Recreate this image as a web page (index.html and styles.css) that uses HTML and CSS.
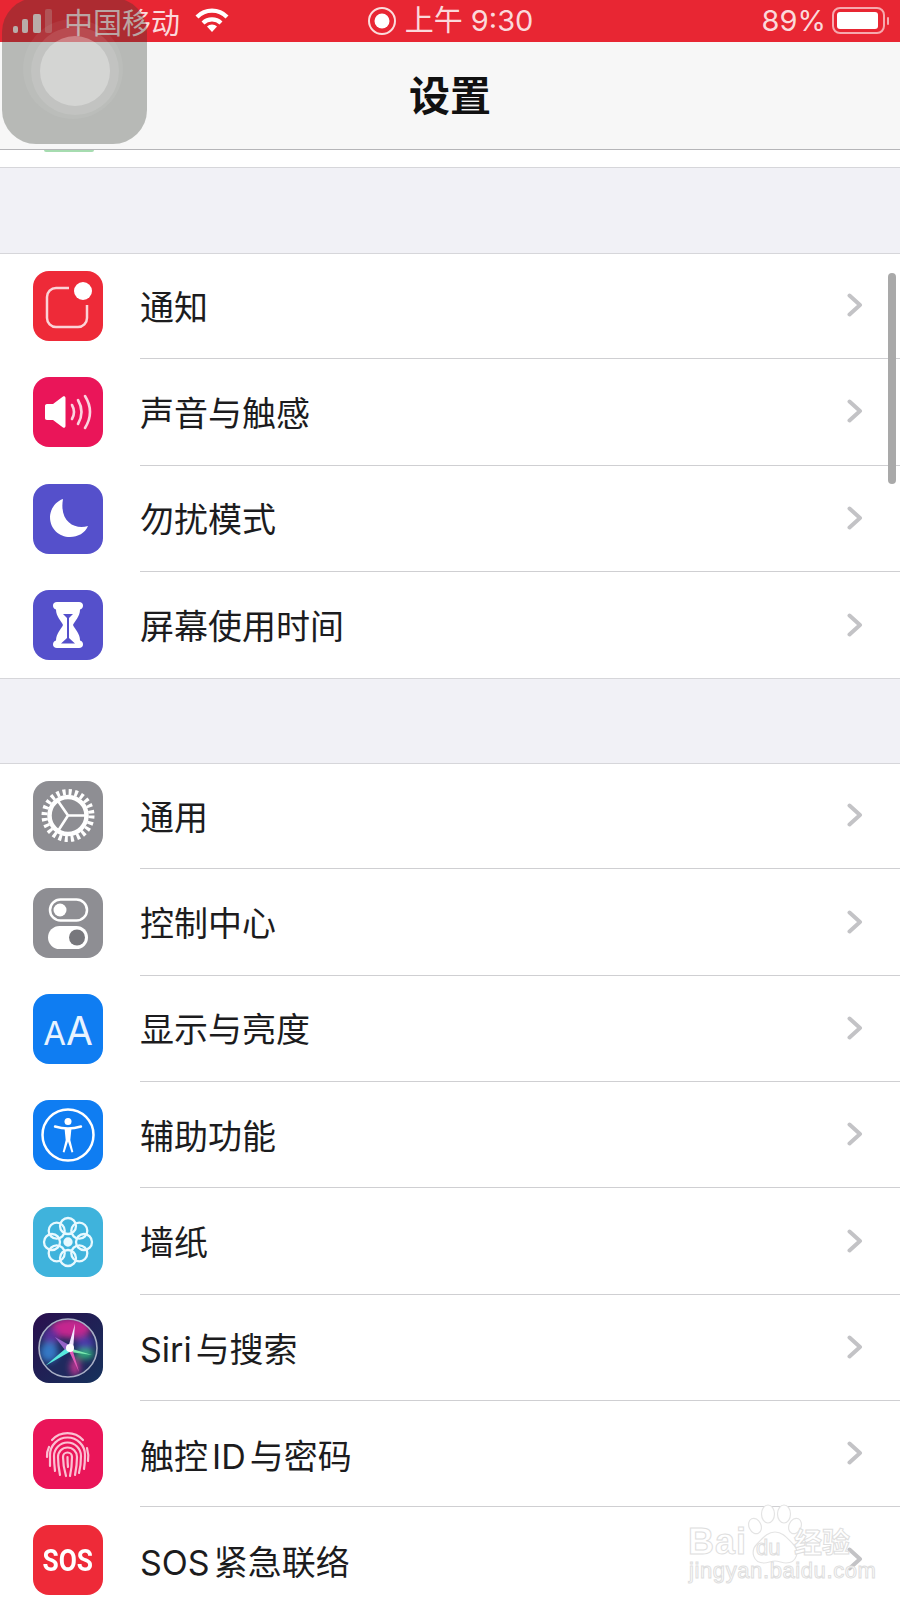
FILE: index.html
```html
<!DOCTYPE html>
<html lang="zh-CN">
<head>
<meta charset="utf-8">
<title>设置</title>
<link rel="stylesheet" href="styles.css">
</head>
<body>
<div class="screen">
  <header class="status">
    <div class="status-left">
      <svg class="signal" width="42" height="28" viewBox="0 0 42 28"><rect x="1" y="19" width="5" height="7" rx="2" fill="#f9e3e3"/><rect x="10" y="12" width="6" height="14" rx="2" fill="#f9e3e3"/><rect x="21" y="7" width="8" height="19" rx="2" fill="#f9e3e3"/><rect x="33" y="2" width="7" height="24" rx="2" fill="#f6d5d5" opacity=".35"/></svg>
      <span class="carrier">中国移动</span>
      <svg class="wifi" width="36" height="26" viewBox="0 0 36 26"><path d="M18 24l-5-5.500a7 7 0 0 1 10 0z" fill="#fff"/><path d="M9 15a13 13 0 0 1 18 0" fill="none" stroke="#fff" stroke-width="4.200"/><path d="M3 9a21 21 0 0 1 30 0" fill="none" stroke="#fff" stroke-width="4.200"/></svg>
    </div>
    <div class="status-mid">
      <svg width="30" height="30" viewBox="0 0 30 30"><circle cx="15" cy="15" r="13" fill="none" stroke="#fbdcdc" stroke-width="2"/><circle cx="15" cy="15" r="7.500" fill="#fff"/></svg>
      <span class="clock">上午 9:30</span>
    </div>
    <div class="status-right">
      <span class="pct">89%</span>
      <svg width="58" height="28" viewBox="0 0 58 28"><rect x="1" y="1" width="51" height="25" rx="7" fill="none" stroke="#f6a9ae" stroke-width="2"/><rect x="5" y="5" width="41" height="17" rx="3" fill="#fff"/><rect x="55" y="10" width="2" height="8" rx="1" fill="#f6a9ae"/></svg>
    </div>
  </header>
  <nav class="nav"><h1 class="title">设置</h1></nav>
  <div class="peek"><span class="peek-green"></span></div>

  <div class="gap"></div>
  <section class="group">
    <div class="row">
      <svg class="icon" viewBox="0 0 70 70"><rect width="70" height="70" rx="16" fill="#ee2a38"/><path d="M36 17H23a9 9 0 0 0-9 9v21a9 9 0 0 0 9 9h22a9 9 0 0 0 9-9V34" fill="none" stroke="#fbd3d6" stroke-width="2.500"/><circle cx="50" cy="20" r="9" fill="#fff"/></svg>
      <div class="row-body"><span class="label">通知</span><svg class="chev" viewBox="0 0 16 24"><path d="M2.500 2.500 13 12 2.500 21.500"/></svg></div>
    </div>
    <div class="row">
      <svg class="icon" viewBox="0 0 70 70"><rect width="70" height="70" rx="16" fill="#ea1559"/><path d="M14 27h6l10-7.500c1-.7 2.500-.2 2.500 1.500v28c0 1.700-1.500 2.200-2.500 1.500L20 43h-6c-1.500 0-2-1-2-2V29c0-1 .5-2 2-2z" fill="#fff"/><path d="M39 28q4 7 0 14M45 23q7 12 0 24M52 19q10 16 0 32" fill="none" stroke="#fbd3df" stroke-width="2.600" stroke-linecap="round"/></svg>
      <div class="row-body"><span class="label">声音与触感</span><svg class="chev" viewBox="0 0 16 24"><path d="M2.500 2.500 13 12 2.500 21.500"/></svg></div>
    </div>
    <div class="row">
      <svg class="icon" viewBox="0 0 70 70"><rect width="70" height="70" rx="16" fill="#5550cb"/><path d="M30 15C21 18 17 27 17 33 17 45 26 53 37 53 45 53 52 49 55 42 42 46 26 38 30 15z" fill="#fff"/></svg>
      <div class="row-body"><span class="label">勿扰模式</span><svg class="chev" viewBox="0 0 16 24"><path d="M2.500 2.500 13 12 2.500 21.500"/></svg></div>
    </div>
    <div class="row">
      <svg class="icon" viewBox="0 0 70 70"><rect width="70" height="70" rx="16" fill="#5550cb"/><path d="M24 12h22c2.500 0 4 1.500 4 3.500s-1 3.500-3 4c0 7-5 11-7 15.500 2 4.500 7 8.500 7 15.500 2 .5 3 2 3 4s-1.500 3.500-4 3.500H24c-2.500 0-4-1.500-4-3.500s1-3.500 3-4c0-7 5-11 7-15.500-2-4.500-7-8.500-7-15.500-2-.5-3-2-3-4s1.500-3.500 4-3.500z" fill="#fff"/><path d="M30 24h10l-4 4v20l6 5.500H28l6-5.500V28z" fill="#5550cb"/></svg>
      <div class="row-body row-last"><span class="label">屏幕使用时间</span><svg class="chev" viewBox="0 0 16 24"><path d="M2.500 2.500 13 12 2.500 21.500"/></svg></div>
    </div>
  </section>

  <div class="gap gap-after"></div>
  <section class="group">
    <div class="row">
      <svg class="icon" viewBox="0 0 70 70"><rect width="70" height="70" rx="16" fill="#8e8e93"/><circle cx="35" cy="34.500" r="18.500" fill="none" stroke="#fff" stroke-width="4.500"/><circle cx="35" cy="34.500" r="23.500" fill="none" stroke="#fff" stroke-width="6" stroke-dasharray="3.080 3.070"/><path d="M35 34.500 25 20M35 34.500H54M35 34.500 25 50" fill="none" stroke="#fff" stroke-width="2.600"/></svg>
      <div class="row-body"><span class="label">通用</span><svg class="chev" viewBox="0 0 16 24"><path d="M2.500 2.500 13 12 2.500 21.500"/></svg></div>
    </div>
    <div class="row">
      <svg class="icon" viewBox="0 0 70 70"><rect width="70" height="70" rx="16" fill="#8e8e93"/><rect x="17" y="11.500" width="37" height="21" rx="10.500" fill="none" stroke="#fff" stroke-width="2.500"/><circle cx="27" cy="22" r="6.500" fill="#fff"/><rect x="15" y="38" width="40" height="23" rx="11.500" fill="#fff"/><circle cx="44" cy="49.500" r="8" fill="#77777c"/></svg>
      <div class="row-body"><span class="label">控制中心</span><svg class="chev" viewBox="0 0 16 24"><path d="M2.500 2.500 13 12 2.500 21.500"/></svg></div>
    </div>
    <div class="row">
      <div class="icon aa"><span class="aa-small">A</span><span class="aa-big">A</span></div>
      <div class="row-body"><span class="label">显示与亮度</span><svg class="chev" viewBox="0 0 16 24"><path d="M2.500 2.500 13 12 2.500 21.500"/></svg></div>
    </div>
    <div class="row">
      <svg class="icon" viewBox="0 0 70 70"><rect width="70" height="70" rx="16" fill="#0f7df2"/><circle cx="35" cy="35" r="25.500" fill="none" stroke="#fff" stroke-width="2.500"/><circle cx="35" cy="21.500" r="3.500" fill="#fff"/><path d="M22 26.500c5 1.500 9 2 13 2s8-.5 13-2" fill="none" stroke="#fff" stroke-width="2.400" stroke-linecap="round"/><path d="M31.500 28h7l-1.200 12 3 12-1.800.6-3.500-11-3.500 11-1.800-.6 3-12z" fill="#fff"/></svg>
      <div class="row-body"><span class="label">辅助功能</span><svg class="chev" viewBox="0 0 16 24"><path d="M2.500 2.500 13 12 2.500 21.500"/></svg></div>
    </div>
    <div class="row">
      <svg class="icon" viewBox="0 0 70 70"><rect width="70" height="70" rx="16" fill="#3fb3dc"/><g fill="none" stroke="#e8f9ff" stroke-width="2.300"><circle cx="35" cy="35" r="3.500" fill="#e8f9ff"/><circle cx="35" cy="19" r="8"/><circle cx="46.300" cy="23.700" r="8"/><circle cx="51" cy="35" r="8"/><circle cx="46.300" cy="46.300" r="8"/><circle cx="35" cy="51" r="8"/><circle cx="23.700" cy="46.300" r="8"/><circle cx="19" cy="35" r="8"/><circle cx="23.700" cy="23.700" r="8"/></g></svg>
      <div class="row-body"><span class="label">墙纸</span><svg class="chev" viewBox="0 0 16 24"><path d="M2.500 2.500 13 12 2.500 21.500"/></svg></div>
    </div>
    <div class="row">
      <svg class="icon" viewBox="0 0 70 70"><defs><linearGradient id="sb" x1="0" y1="0" x2="1" y2="1"><stop offset="0" stop-color="#2a0f4e"/><stop offset="1" stop-color="#16325c"/></linearGradient><filter id="b3" x="-50%" y="-50%" width="200%" height="200%"><feGaussianBlur stdDeviation="3"/></filter><filter id="b1" x="-50%" y="-50%" width="200%" height="200%"><feGaussianBlur stdDeviation=".5"/></filter><clipPath id="sclip"><circle cx="35" cy="35" r="29"/></clipPath></defs><rect width="70" height="70" rx="16" fill="url(#sb)"/><g clip-path="url(#sclip)"><rect width="70" height="70" fill="#1f2a5e"/><g filter="url(#b3)"><ellipse cx="38" cy="15" rx="20" ry="10" fill="#c5278f"/><ellipse cx="18" cy="24" rx="8" ry="9" fill="#5a2f9c"/><ellipse cx="16" cy="39" rx="9" ry="10" fill="#3478c4"/><ellipse cx="52" cy="30" rx="9" ry="7" fill="#4a3aa8"/><ellipse cx="52" cy="41" rx="9" ry="5" fill="#2fb07a"/><ellipse cx="42" cy="54" rx="5" ry="9" fill="#b8348f"/></g><g filter="url(#b1)"><path d="M38 31 12 53 40 37z" fill="#58eadf"/><path d="M35 35 42 11 40 37z" fill="#f3e6ff"/><path d="M33 34 59 42 37 39z" fill="#7be8b0"/><path d="M35 36 46 59 39 35z" fill="#e35ab8"/><path d="M22 24 38 33 32 37z" fill="#b070e0" opacity=".8"/><circle cx="37" cy="35" r="4" fill="#fff"/></g></g><circle cx="35" cy="35" r="29" fill="none" stroke="#a9b0c6" stroke-width="1.600"/></svg>
      <div class="row-body"><span class="label">Siri<span class="cjk cjk-gap">与搜索</span></span><svg class="chev" viewBox="0 0 16 24"><path d="M2.500 2.500 13 12 2.500 21.500"/></svg></div>
    </div>
    <div class="row">
      <svg class="icon" viewBox="0 0 70 70"><rect width="70" height="70" rx="16" fill="#ea1559"/><g fill="none" stroke="#fbc0d2" stroke-width="2.200" stroke-linecap="round"><path d="M19 21A21 21 0 0 1 50 21"/><path d="M14 38A20 20 0 0 1 16 28M54 29Q56 36 55 42"/><path d="M17 47Q17 40 17 36A17.500 17.500 0 0 1 52 36Q52 44 51 50"/><path d="M22 52Q21 44 21 37A13.500 13.500 0 0 1 48 37Q48 46 46 54"/><path d="M27 56Q25 46 25 38A9.500 9.500 0 0 1 44 38Q44 46 42 56"/><path d="M33 57Q30 47 30 38A4.500 4.500 0 0 1 39 38Q39 48 37 57"/><path d="M34.500 38Q34.500 44 35 48"/></g></svg>
      <div class="row-body"><span class="label">触控<span class="latin-gap">ID</span><span class="cjk cjk-gap">与密码</span></span><svg class="chev" viewBox="0 0 16 24"><path d="M2.500 2.500 13 12 2.500 21.500"/></svg></div>
    </div>
    <div class="row">
      <div class="icon sos"><span class="sos-text">SOS</span></div>
      <div class="row-body"><span class="label">SOS<span class="cjk cjk-gap">紧急联络</span></span><svg class="chev" viewBox="0 0 16 24"><path d="M2.500 2.500 13 12 2.500 21.500"/></svg></div>
    </div>
  </section>

  <div class="scrollbar"></div>

  <div class="assist">
    <span class="assist-ring3"></span>
    <span class="assist-ring2"></span>
    <span class="assist-dot"></span>
  </div>

  <div class="watermark">
    <svg class="paw" width="70" height="66" viewBox="0 0 70 66"><g fill="#fff" stroke="#e4e4e4" stroke-width="1.200"><ellipse cx="28" cy="10" rx="6.500" ry="9"/><ellipse cx="44" cy="10" rx="6.500" ry="9"/><ellipse cx="15" cy="22" rx="6" ry="8" transform="rotate(-25 15 22)"/><ellipse cx="55" cy="22" rx="6" ry="8" transform="rotate(25 55 22)"/><path d="M35 28c8 0 12 6 18 12 7 7 4 19-7 19-4 0-7-2-11-2s-7 2-11 2c-11 0-14-12-7-19 6-6 10-12 18-12z"/></g></svg>
    <span class="wm-bai">Bai</span>
    <span class="wm-du">du</span>
    <span class="wm-cn">经验</span>
    <span class="wm-url">jingyan.baidu.com</span>
  </div>
</div>
</body>
</html>
```

FILE: styles.css
```css
* { box-sizing: border-box; }
html, body { margin: 0; padding: 0; }
body {
  background: #fff;
  font-family: "Inter", "Noto Sans CJK SC", sans-serif;
  color: #1c1c1e;
}
.screen {
  position: relative;
  width: 900px;
  height: 1600px;
  overflow: hidden;
  background: #fff;
}

/* Status bar */
.status {
  height: 42px;
  background: #e82633;
  color: #fbd9db;
  display: grid;
  grid-template-columns: 1fr auto 1fr;
  align-items: center;
  font-size: 29px;
}
.status-left { display: flex; align-items: center; padding-left: 12px; }
.signal { margin-right: 10px; }
.carrier { font-family: "Noto Sans CJK SC", sans-serif; font-size: 29px; line-height: 42px; }
.wifi { margin-left: 14px; }
.status-mid { display: flex; align-items: center; gap: 8px; }
.clock { font-family: "Inter", "Noto Sans CJK SC", sans-serif; font-size: 29px; line-height: 42px; white-space: nowrap; }
.status-right { display: flex; justify-content: flex-end; align-items: center; gap: 6px; padding-right: 10px; }
.pct { font-size: 29px; line-height: 42px; }

/* Nav */
.nav {
  height: 108px;
  padding-bottom: 6px;
  background: #f7f7f7;
  border-bottom: 1px solid #b5b5b8;
  display: flex;
  align-items: center;
  justify-content: center;
}
.title {
  margin: 0;
  font-family: "Noto Sans CJK SC", sans-serif;
  font-size: 41px;
  line-height: 50px;
  font-weight: 700;
  color: #111;
}
.peek {
  height: 18px;
  background: #fff;
  border-bottom: 1px solid #d6d6da;
  position: relative;
}
.peek-green {
  position: absolute;
  left: 44px;
  top: 0;
  width: 50px;
  height: 2px;
  border-radius: 0 0 6px 6px;
  background: #a6dcb0;
}

/* Groups */
.gap {
  height: 86px;
  background: #f1f1f6;
  border-bottom: 1px solid #d6d6da;
}
.gap-after { border-top: 1px solid #d6d6da; }
.group { margin-top: -1px; }
.row {
  height: 106.3px;
  display: flex;
  align-items: center;
  padding-left: 33px;
}
.icon {
  flex: none;
  width: 70px;
  height: 70px;
  display: block;
}
.row-body {
  flex: 1;
  height: 100%;
  margin-left: 37px;
  padding-right: 37px;
  border-bottom: 1px solid #cfcfd2;
  display: flex;
  align-items: center;
  justify-content: space-between;
}
.row-last { border-bottom: 0; }
.label {
  font-family: "Inter", "Noto Sans CJK SC", sans-serif;
  font-size: 34px;
  line-height: 44px;
  padding-top: 4px;
  color: #1c1c1e;
  white-space: nowrap;
}
.cjk { font-family: "Noto Sans CJK SC", sans-serif; }
.cjk-gap { margin-left: 4px; }
.latin-gap { margin-left: 4px; }
.chev {
  width: 16px;
  height: 24px;
  margin-bottom: 1px;
  fill: none;
  stroke: #c3c3c6;
  stroke-width: 4;
  stroke-linecap: round;
  stroke-linejoin: round;
}
.aa {
  background: #0f7df2;
  border-radius: 16px;
  color: #e8f3ff;
  font-family: "Inter", sans-serif;
  display: flex;
  justify-content: center;
  align-items: baseline;
  line-height: 70px;
  padding-top: 2px;
}
.aa-small { font-size: 33px; }
.aa-big { font-size: 39px; }
.sos {
  background: #ee2a38;
  border-radius: 16px;
  color: #fff;
  text-align: center;
}
.sos-text {
  display: inline-block;
  font-family: "Roboto", sans-serif;
  font-size: 32px;
  font-weight: 700;
  line-height: 70px;
  transform: scaleX(.82);
}

/* Overlays */
.scrollbar {
  position: absolute;
  left: 888px;
  top: 273px;
  width: 8px;
  height: 211px;
  border-radius: 4px;
  background: #a9a9a9;
}
.assist {
  position: absolute;
  left: 2px;
  top: -2px;
  width: 145px;
  height: 146px;
  border-radius: 34px;
  background: rgba(50, 55, 48, 0.32);
}
.assist-ring3, .assist-ring2, .assist-dot {
  position: absolute;
  border-radius: 50%;
}
.assist-ring3 { left: 21px; top: 21px; width: 100px; height: 100px; background: rgba(255, 255, 255, 0.06); }
.assist-ring2 { left: 29px; top: 29px; width: 88px; height: 88px; background: rgba(255, 255, 255, 0.1); }
.assist-dot { left: 38px; top: 38px; width: 70px; height: 70px; background: rgba(255, 255, 255, 0.3); }

.watermark {
  position: absolute;
  left: 688px;
  top: 1500px;
  width: 170px;
  height: 90px;
}
.paw { position: absolute; left: 52px; top: 4px; }
.wm-bai, .wm-du, .wm-cn, .wm-url {
  position: absolute;
  color: #fff;
  -webkit-text-stroke: 1px #dedede;
  white-space: nowrap;
}
.wm-bai { left: 0; top: 20px; font: 700 36px/44px "Liberation Sans", sans-serif; letter-spacing: 1px; }
.wm-du { left: 68px; top: 34px; font: 400 22px/28px "Liberation Sans", sans-serif; }
.wm-cn { left: 106px; top: 21px; font: 700 28px/40px "Noto Sans CJK SC", sans-serif; }
.wm-url { left: 1px; top: 58px; font: 400 22px/26px "Liberation Sans", sans-serif; letter-spacing: .6px; }
```
